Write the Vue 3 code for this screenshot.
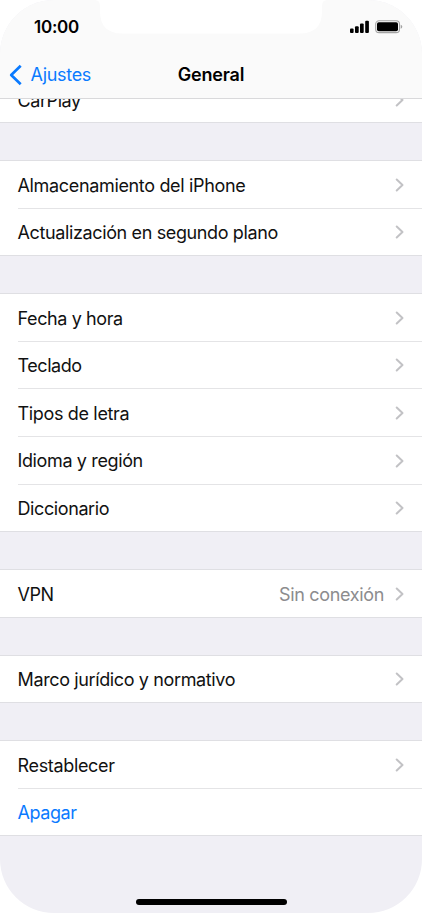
<script setup>
const groups = [
  [
    { label: 'Almacenamiento del iPhone', spacing: -0.34 },
    { label: 'Actualización en segundo plano', spacing: -0.37 },
  ],
  [
    { label: 'Fecha y hora', spacing: -0.39 },
    { label: 'Teclado', spacing: -0.45 },
    { label: 'Tipos de letra', spacing: -0.34 },
    { label: 'Idioma y región', spacing: -0.37 },
    { label: 'Diccionario', spacing: -0.4 },
  ],
  [{ label: 'VPN', value: 'Sin conexión', spacing: -0.4 }],
  [{ label: 'Marco jurídico y normativo', spacing: -0.37 }],
  [
    { label: 'Restablecer', spacing: -0.34 },
    { label: 'Apagar', action: true, spacing: -0.42 },
  ],
]
</script>

<template>
  <div class="phone">
    <header class="header">
      <div class="status">
        <span class="time">10:00</span>
        <div class="notch">
          <svg width="232" height="34" viewBox="0 0 232 34">
            <path d="M0 0 Q5 0 5 6 V11 Q5 33.5 27 33.5 H205 Q227 33.5 227 11 V6 Q227 0 232 0 Z" fill="#fff" />
          </svg>
        </div>
        <svg class="indicators" width="54" height="14" viewBox="0 0 54 14">
          <rect x="0" y="8.5" width="3.6" height="4.5" rx="1" />
          <rect x="5" y="6.3" width="3.7" height="6.7" rx="1" />
          <rect x="10" y="3.6" width="3.7" height="9.4" rx="1" />
          <rect x="15.2" y="0.7" width="3.7" height="12.3" rx="1" />
          <rect x="25.7" y="0.8" width="23.8" height="11.8" rx="3.4" fill="none" stroke="#a3a3a3" stroke-width="1.1" />
          <rect x="27" y="2.2" width="21" height="9" rx="1.8" />
          <path d="M50.7 4.8 Q52.3 5.4 52.3 6.8 Q52.3 8.2 50.7 8.8 Z" fill="#a3a3a3" />
        </svg>
      </div>
      <nav class="nav">
        <a class="back">
          <svg width="13" height="22" viewBox="0 0 13 22">
            <path d="M11.7 1.7 L2.2 11 L11.7 20.3" fill="none" stroke="#0a7aff" stroke-width="2.7" stroke-linecap="butt" stroke-linejoin="round" />
          </svg>
          <span class="back-label">Ajustes</span>
        </a>
        <h1 class="title">General</h1>
      </nav>
    </header>

    <main class="list">
      <div class="clipped">
        <div class="row">
          <div class="inner">
            <span class="label">CarPlay</span>
            <svg class="chevron" width="10" height="14" viewBox="0 0 10 14">
              <path d="M1.7 1.5 L7.5 7 L1.7 12.5" />
            </svg>
          </div>
        </div>
      </div>
      <section v-for="(group, g) in groups" :key="g" class="group">
        <div v-for="row in group" :key="row.label" class="row">
          <div class="inner">
            <span class="label" :class="{ action: row.action }" :style="{ letterSpacing: row.spacing + 'px' }">{{ row.label }}</span>
            <span v-if="row.value" class="value">{{ row.value }}</span>
            <svg v-if="!row.action" class="chevron" width="10" height="14" viewBox="0 0 10 14">
              <path d="M1.7 1.5 L7.5 7 L1.7 12.5" />
            </svg>
          </div>
        </div>
      </section>
      <footer class="footer"><div class="home"></div></footer>
    </main>
  </div>
</template>

<style>
body {
  background: #fff;
}
</style>

<style scoped>
.phone {
  width: 422px;
  height: 913px;
  box-sizing: border-box;
  display: flex;
  flex-direction: column;
  overflow: hidden;
  border-radius: 54px;
  background: #f0eff5;
  color: #111;
  font-family: Inter, "Liberation Sans", sans-serif;
  font-size: 18px;
}
.header {
  height: 99px;
  flex: none;
  box-sizing: border-box;
  background: #fafafa;
  border-bottom: 1px solid #d9d9db;
}
.status {
  height: 52px;
  display: grid;
  grid-template-columns: 95px 232px 95px;
}
.time {
  padding: 16px 0 0 34px;
  font-size: 17px;
  line-height: 22px;
  font-weight: 600;
  letter-spacing: -0.25px;
  color: #000;
}
.notch {
  height: 34px;
}
.indicators {
  margin: 20px 0 0 23px;
}
.nav {
  height: 45px;
  display: grid;
  grid-template-columns: 1fr auto 1fr;
  align-items: center;
}
.back {
  display: flex;
  align-items: center;
  gap: 8.6px;
  padding-left: 9px;
  color: #0a7aff;
}
.back-label {
  letter-spacing: -0.32px;
}
.title {
  margin: 0;
  font-size: 18px;
  font-weight: 600;
  letter-spacing: -0.2px;
  color: #000;
}
.list {
  flex: 1;
  display: flex;
  flex-direction: column;
}
.clipped {
  height: 23.2px;
  flex: none;
  display: flex;
  flex-direction: column;
  justify-content: flex-end;
  overflow: hidden;
  background: #fff;
}
.group {
  margin-top: 37.9px;
  flex: none;
  position: relative;
  background: #fff;
  box-shadow: 0 1px 0 #dfdfe3;
}
.clipped + .group::before {
  content: "";
  position: absolute;
  top: -38px;
  left: 0;
  right: 0;
  height: 1px;
  background: #dfdfe3;
}
.row {
  height: 47.6px;
  flex: none;
  box-sizing: border-box;
  padding-left: 17.5px;
}
.inner {
  height: 100%;
  box-sizing: border-box;
  display: flex;
  align-items: center;
  padding: 1.4px 18px 0 0;
  border-top: 1px solid #e4e4e6;
}
.group .row:first-child {
  border-top: 1px solid #dfdfe3;
}
.group .row:first-child .inner {
  border-top: none;
  padding-top: 1.8px;
}
.clipped .inner {
  padding-top: 3px;
}
.label {
  flex: 1;
  white-space: nowrap;
  letter-spacing: -0.42px;
}
.action {
  color: #0a7aff;
}
.value {
  margin-right: 11px;
  color: #8c8c8e;
  letter-spacing: -0.33px;
}
.chevron {
  flex: none;
  margin: -0.5px -1px 0 0;
  fill: none;
  stroke: #c2c2c5;
  stroke-width: 2;
  stroke-linecap: round;
  stroke-linejoin: round;
}
.footer {
  flex: 1;
  display: flex;
  justify-content: center;
  align-items: flex-end;
  padding-bottom: 8.5px;
}
.home {
  width: 151px;
  height: 5.5px;
  border-radius: 3px;
  background: #000;
}
</style>
